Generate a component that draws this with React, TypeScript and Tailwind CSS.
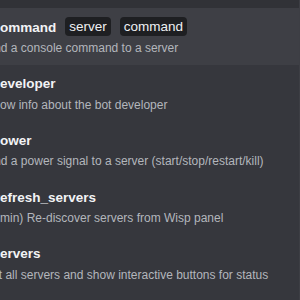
import React from "react";

const rows = [
  { title: "command", desc: "Send a console command to a server", chips: ["server", "command"], active: true, t: -7.5, d: -20.5 },
  { title: "developer", desc: "Show info about the bot developer", chips: [] as string[], t: -8.2, d: -14.7 },
  { title: "power", desc: "Send a power signal to a server (start/stop/restart/kill)", chips: [] as string[], t: -8.2, d: -20.5 },
  { title: "refresh_servers", desc: "(Admin) Re-discover servers from Wisp panel", chips: [] as string[], t: -5.3, d: -18.7 },
  { title: "servers", desc: "List all servers and show interactive buttons for status", chips: [] as string[], t: -7.5, d: -16.6 },
];

export default function App() {
  return (
    <div
      className="w-[300px] h-[300px] overflow-hidden bg-[#36373d] flex"
      style={{ fontFamily: '"Liberation Sans", Arial, sans-serif' }}
    >
      <div className="flex-1 flex flex-col overflow-hidden">
        <div className="h-[8px] shrink-0 bg-[#313237]" />
        {rows.map((r, i) => (
          <div
            key={i}
            className={`h-[56.6px] shrink-0 flex flex-col pt-[10.8px] ${r.active ? "bg-[#3e3f45]" : ""}`}
          >
            <div className="flex items-center h-[18px] whitespace-nowrap" style={{ marginLeft: r.t }}>
              <span className="text-[13.5px] font-bold text-[#f2f3f5] leading-[18px]">{r.title}</span>
              {r.chips.map((c) => (
                <span
                  key={c}
                  className="ml-[9px] px-[4px] h-[19px] -mt-[2px] flex items-center rounded-[4px] bg-[#1e1f22] text-[13.5px] text-[#eef0f2] leading-none"
                >
                  {c}
                </span>
              ))}
            </div>
            <div
              className="mt-[3.5px] text-[12px] text-[#b3b6bc] leading-[16px] whitespace-nowrap"
              style={{ marginLeft: r.d }}
            >
              {r.desc}
            </div>
          </div>
        ))}
      </div>
      <div className="w-[1px] shrink-0 bg-[#3d3e44]" />
    </div>
  );
}
